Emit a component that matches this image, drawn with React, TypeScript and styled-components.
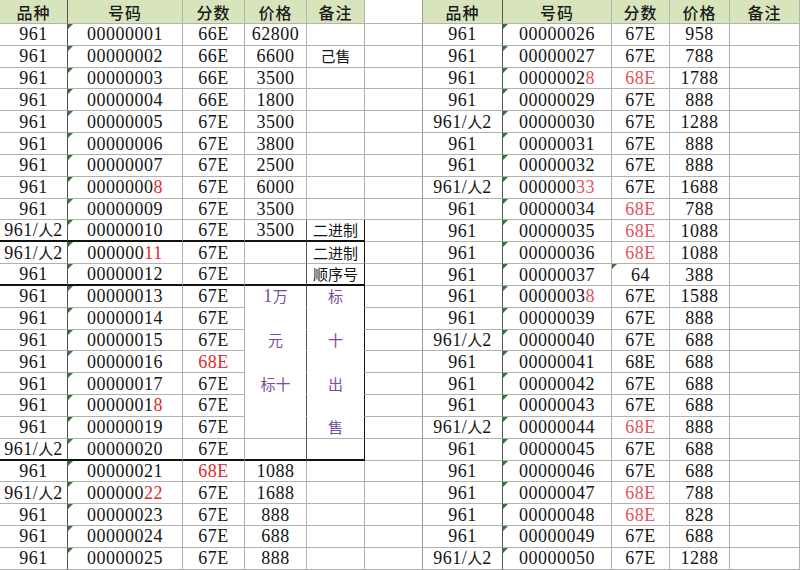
import React from 'react';
import styled, { createGlobalStyle } from 'styled-components';

const Global = createGlobalStyle`
  html, body { margin: 0; padding: 0; background: #fff; }
  body { width: 800px; height: 570px; overflow: hidden; }
`;

const COLS = [68, 115, 62, 62, 58, 58, 80, 109, 58, 60, 70];

const GRID = '#b2b2b2';
const DARK = '#555';
const BLACK = '#111';

const Sheet = styled.div`
  display: grid;
  grid-template-columns: ${COLS.map((c) => `${c}px`).join(' ')};
  grid-template-rows: 24px repeat(25, 21.84px);
  width: 800px;
  height: 570px;
  overflow: hidden;
  font-family: "Liberation Serif", "Noto Sans CJK SC", serif;
  color: #141414;
`;

type CellProps = {
  $head?: boolean;
  $plain?: boolean;
  $r?: string;
  $b?: string;
  $bw?: number;
  $tri?: boolean;
  $ink?: string;
};

const Cell = styled.div<CellProps>`
  position: relative;
  box-sizing: border-box;
  display: flex;
  align-items: center;
  justify-content: center;
  white-space: nowrap;
  line-height: 18px;
  font-size: 18px;
  letter-spacing: 0.5px;
  color: ${(p) => p.$ink ?? '#141414'};
  background: ${(p) => (p.$head && !p.$plain ? '#d8e4bc' : '#fff')};
  border-right: 1px solid ${(p) => p.$r ?? GRID};
  border-bottom: ${(p) => p.$bw ?? 1}px solid ${(p) => p.$b ?? GRID};

  &::before {
    content: '';
    display: ${(p) => (p.$tri ? 'block' : 'none')};
    position: absolute;
    left: 0;
    top: 0;
    width: 0;
    height: 0;
    border-top: 5px solid #2f7d32;
    border-right: 5px solid transparent;
  }
`;

const HeadText = styled.span`
  font-family: "Noto Sans CJK SC", sans-serif;
  font-size: 16px;
  line-height: 18px;
  font-weight: 500;
  letter-spacing: 1px;
  color: #1b1b1b;
`;

const Han = styled.span`
  font-family: "Noto Sans CJK SC", sans-serif;
  font-size: 15px;
  line-height: 18px;
  letter-spacing: 0;
`;

const Red = styled.span<{ $soft?: boolean }>`
  color: ${(p) => (p.$soft ? '#e2525e' : '#de2b2b')};
`;

const PURPLE = '#7a4c9f';

function rich(s: string) {
  const parts = s.split(/([\u4e00-\u9fff]+)/).filter(Boolean);
  return parts.map((t, i) =>
    /[\u4e00-\u9fff]/.test(t) ? <Han key={i}>{t}</Han> : <React.Fragment key={i}>{t}</React.Fragment>
  );
}

type Row = {
  v: string;
  code: string;
  red?: number;
  s: string;
  sRed?: boolean;
  p?: string;
  n?: string;
  pp?: boolean;
  pn?: boolean;
  sTri?: boolean;
};

const LEFT: Row[] = [
  { v: '961', code: '00000001', s: '66E', p: '62800' },
  { v: '961', code: '00000002', s: '66E', p: '6600', n: '己售' },
  { v: '961', code: '00000003', s: '66E', p: '3500' },
  { v: '961', code: '00000004', s: '66E', p: '1800' },
  { v: '961', code: '00000005', s: '67E', p: '3500' },
  { v: '961', code: '00000006', s: '67E', p: '3800' },
  { v: '961', code: '00000007', s: '67E', p: '2500' },
  { v: '961', code: '00000008', red: 1, s: '67E', p: '6000' },
  { v: '961', code: '00000009', s: '67E', p: '3500' },
  { v: '961/人2', code: '00000010', s: '67E', p: '3500', n: '二进制' },
  { v: '961/人2', code: '00000011', red: 2, s: '67E', n: '二进制' },
  { v: '961', code: '00000012', s: '67E', n: '顺序号' },
  { v: '961', code: '00000013', s: '67E', p: '1万', pp: true, n: '标', pn: true },
  { v: '961', code: '00000014', s: '67E' },
  { v: '961', code: '00000015', s: '67E', p: '元', pp: true, n: '十', pn: true },
  { v: '961', code: '00000016', s: '68E', sRed: true },
  { v: '961', code: '00000017', s: '67E', p: '标十', pp: true, n: '出', pn: true },
  { v: '961', code: '00000018', red: 1, s: '67E' },
  { v: '961', code: '00000019', s: '67E', n: '售', pn: true },
  { v: '961/人2', code: '00000020', s: '67E' },
  { v: '961', code: '00000021', s: '68E', sRed: true, p: '1088' },
  { v: '961/人2', code: '00000022', red: 2, s: '67E', p: '1688' },
  { v: '961', code: '00000023', s: '67E', p: '888' },
  { v: '961', code: '00000024', s: '67E', p: '688' },
  { v: '961', code: '00000025', s: '67E', p: '888' },
];

const RIGHT: Row[] = [
  { v: '961', code: '00000026', s: '67E', p: '958' },
  { v: '961', code: '00000027', s: '67E', p: '788' },
  { v: '961', code: '00000028', red: 1, s: '68E', sRed: true, p: '1788' },
  { v: '961', code: '00000029', s: '67E', p: '888' },
  { v: '961/人2', code: '00000030', s: '67E', p: '1288' },
  { v: '961', code: '00000031', s: '67E', p: '888' },
  { v: '961', code: '00000032', s: '67E', p: '888' },
  { v: '961/人2', code: '00000033', red: 2, s: '67E', p: '1688' },
  { v: '961', code: '00000034', s: '68E', sRed: true, p: '788' },
  { v: '961', code: '00000035', s: '68E', sRed: true, p: '1088' },
  { v: '961', code: '00000036', s: '68E', sRed: true, p: '1088' },
  { v: '961', code: '00000037', s: '64', sTri: true, p: '388' },
  { v: '961', code: '00000038', red: 1, s: '67E', p: '1588' },
  { v: '961', code: '00000039', s: '67E', p: '888' },
  { v: '961/人2', code: '00000040', s: '67E', p: '688' },
  { v: '961', code: '00000041', s: '68E', p: '688' },
  { v: '961', code: '00000042', s: '67E', p: '688' },
  { v: '961', code: '00000043', s: '67E', p: '688' },
  { v: '961/人2', code: '00000044', s: '68E', sRed: true, p: '888' },
  { v: '961', code: '00000045', s: '67E', p: '688' },
  { v: '961', code: '00000046', s: '67E', p: '688' },
  { v: '961', code: '00000047', s: '68E', sRed: true, p: '788' },
  { v: '961', code: '00000048', s: '68E', sRed: true, p: '828' },
  { v: '961', code: '00000049', s: '67E', p: '688' },
  { v: '961/人2', code: '00000050', s: '67E', p: '1288' },
];

const HEADERS = ['品种', '号码', '分数', '价格', '备注'];

function Code({ code, red, soft }: { code: string; red?: number; soft?: boolean }) {
  if (!red) return <>{code}</>;
  return (
    <>
      {code.slice(0, code.length - red)}
      <Red $soft={soft}>{code.slice(code.length - red)}</Red>
    </>
  );
}

function leftCells(r: Row, i: number) {
  const no = i + 1;
  const heavy = no === 10 || no === 12 || no === 20;
  const boxed = no >= 10 && no <= 20;
  const merged = no >= 13 && no <= 18;
  const hb = heavy ? BLACK : undefined;
  const hw = heavy ? 2 : 1;
  return [
    <Cell key={`l0-${i}`} $r={DARK} $b={hb} $bw={hw}>{rich(r.v)}</Cell>,
    <Cell key={`l1-${i}`} $tri $b={hb} $bw={hw}>
      <Code code={r.code} red={r.red} />
    </Cell>,
    <Cell key={`l2-${i}`} $b={hb} $bw={hw}>
      {r.sRed ? <Red>{r.s}</Red> : r.s}
    </Cell>,
    <Cell
      key={`l3-${i}`}
      $r={boxed ? DARK : undefined}
      $b={merged ? 'transparent' : hb}
      $bw={hw}
      $ink={r.pp ? PURPLE : undefined}
    >
      {r.p ? rich(r.p) : null}
    </Cell>,
    <Cell
      key={`l4-${i}`}
      $r={boxed ? BLACK : undefined}
      $b={merged ? 'transparent' : hb}
      $bw={hw}
      $ink={r.pn ? PURPLE : undefined}
    >
      {r.n ? rich(r.n) : null}
    </Cell>,
  ];
}

function rightCells(r: Row, i: number) {
  return [
    <Cell key={`r0-${i}`} $r={DARK}>{rich(r.v)}</Cell>,
    <Cell key={`r1-${i}`} $tri>
      <Code code={r.code} red={r.red} soft />
    </Cell>,
    <Cell key={`r2-${i}`} $tri={r.sTri}>
      {r.sRed ? <Red $soft>{r.s}</Red> : r.s}
    </Cell>,
    <Cell key={`r3-${i}`}>{r.p}</Cell>,
    <Cell key={`r4-${i}`} />,
  ];
}

export default function App() {
  return (
    <>
      <Global />
      <Sheet>
        {HEADERS.map((h, i) => (
          <Cell key={`hl${i}`} $head $r={i === 0 ? DARK : undefined}>
            <HeadText>{h}</HeadText>
          </Cell>
        ))}
        <Cell $head $plain $r="#999" />
        {HEADERS.map((h, i) => (
          <Cell key={`hr${i}`} $head $r={i === 0 ? DARK : undefined}>
            <HeadText>{h}</HeadText>
          </Cell>
        ))}
        {LEFT.map((r, i) => (
          <React.Fragment key={i}>
            {leftCells(r, i)}
            <Cell $r="#999" />
            {rightCells(RIGHT[i], i)}
          </React.Fragment>
        ))}
      </Sheet>
    </>
  );
}
